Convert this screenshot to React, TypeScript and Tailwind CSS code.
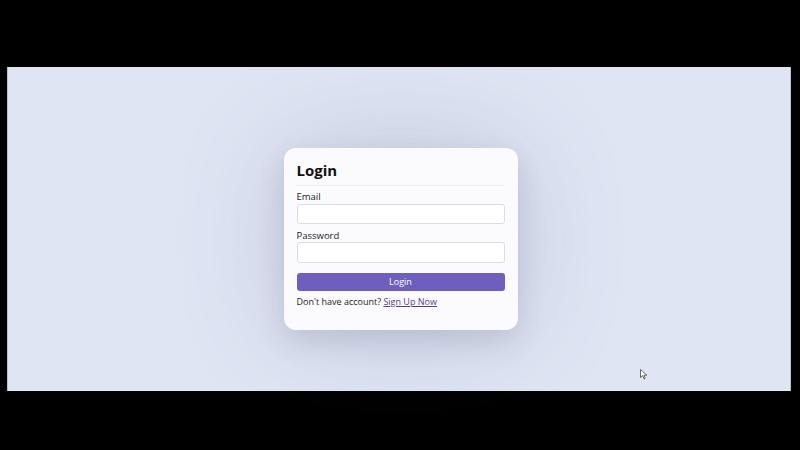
export default function App() {
  return (
    <div className="h-[450px] w-[800px] bg-black pt-[67px] pl-[7px] overflow-hidden">
      <div
        className="relative h-[324px] w-[784px] border-l border-r border-[#b8bfcf] bg-[#dfe5f3] flex justify-center pt-[81px]"
        style={{ fontFamily: '"Open Sans", "Liberation Sans", sans-serif' }}
      >
        {/* Card */}
        <div className="ml-[3px] h-[182px] w-[234px] rounded-[12px] bg-[#fbfbfd] px-[13px] pt-[11px] shadow-[0_12px_28px_rgba(50,55,90,0.14),0_0_110px_rgba(75,80,120,0.20)]">
          <h1 className="text-[15px] leading-[22px] font-bold text-[#111]">Login</h1>
          <div className="mt-[4px] h-px bg-[#eeeef3]" />

          <div className="mt-[5px]">
            <label className="block text-[9.5px] leading-[12px] text-[#222]">Email</label>
            <div className="mt-[1px] h-[20px] rounded-[3px] border border-[#dcdce3] bg-white" />
          </div>

          <div className="mt-[6px]">
            <label className="block text-[9.5px] leading-[12px] text-[#222]">Password</label>
            <div className="h-[21px] rounded-[3px] border border-[#dcdce3] bg-white" />
          </div>

          <button className="mt-[10px] flex h-[18px] w-full items-center justify-center rounded-[3px] bg-[#6e5fbf] text-[9px] text-white">
            Login
          </button>

          <p className="mt-[5px] text-[9px] leading-[12px] text-[#222]">
            Don't have account?{" "}
            <a href="#" className="text-[#5a3b8c] underline">
              Sign Up Now
            </a>
          </p>
        </div>

        {/* mouse cursor */}
        <svg
          className="absolute left-[632px] top-[302px]"
          width="8"
          height="11"
          viewBox="0 0 8 11"
        >
          <path d="M0.5 0.5 L0.5 8.5 L2.6 6.6 L4 9.8 L5.2 9.3 L3.9 6.2 L6.8 6.2 Z" fill="#fff" stroke="#444" strokeWidth="0.8" />
        </svg>
      </div>
    </div>
  );
}
